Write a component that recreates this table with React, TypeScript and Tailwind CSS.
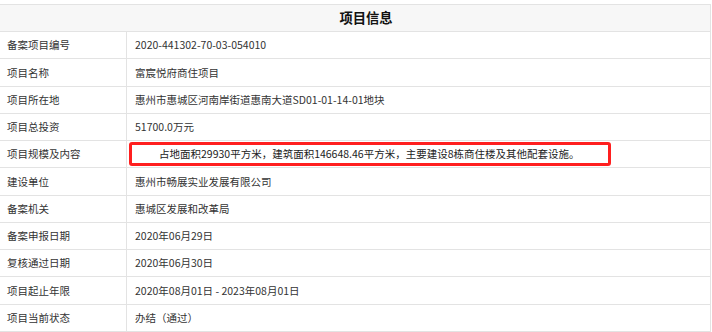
import React from "react";

type Row = { label: string; value: string; h: string; mark?: boolean };

const rows: Row[] = [
    { label: "备案项目编号", value: "2020-441302-70-03-054010", h: "h-[27px]" },
    { label: "项目名称", value: "富宸悦府商住项目", h: "h-[28px]" },
    { label: "项目所在地", value: "惠州市惠城区河南岸街道惠南大道SD01-01-14-01地块", h: "h-[27px]" },
    { label: "项目总投资", value: "51700.0万元", h: "h-[27px]" },
    {
        label: "项目规模及内容",
        value: "\u3000\u3000占地面积29930平方米，建筑面积146648.46平方米，主要建设8栋商住楼及其他配套设施。",
        h: "h-[27px]",
        mark: true,
    },
    { label: "建设单位", value: "惠州市畅展实业发展有限公司", h: "h-[28px]" },
    { label: "备案机关", value: "惠城区发展和改革局", h: "h-[27px]" },
    { label: "备案申报日期", value: "2020年06月29日", h: "h-[27px]" },
    { label: "复核通过日期", value: "2020年06月30日", h: "h-[27px]" },
    { label: "项目起止年限", value: "2020年08月01日 - 2023年08月01日", h: "h-[28px]" },
    { label: "项目当前状态", value: "办结（通过）", h: "h-[27px]" },
];

const App = () => {
    return (
        <div
            className="w-[712px] h-[332px] bg-white pt-[4px] text-[10.5px] text-[#333]"
            style={{ fontFamily: '"Noto Sans CJK SC", "Noto Sans", sans-serif' }}
        >
            <div className="w-[711px] border-t border-r border-[#e3e3e3]">
                <div className="h-[27px] flex items-center justify-center pl-[22px] bg-[#f7f7f7] border-b border-[#e3e3e3] text-[13.3px] font-bold text-[#111]">
                    项目信息
                </div>

                {rows.map((r) => (
                    <div key={r.label} className={`${r.h} flex border-b border-[#e3e3e3]`}>
                        <div className="w-[127px] shrink-0 flex items-center pl-[7px] border-r border-[#e3e3e3]">
                            {r.label}
                        </div>
                        <div className="flex-1 flex items-center pl-[2px] py-[1px]">
                            {r.mark ? (
                                <div className="h-full w-[482px] flex items-center pl-[6px] border-[3px] border-[#ff1f1f] rounded-[3px] text-[#222]">
                                    {r.value}
                                </div>
                            ) : (
                                <span className="pl-[6px]">{r.value}</span>
                            )}
                        </div>
                    </div>
                ))}
            </div>
        </div>
    );
};

export default App;
